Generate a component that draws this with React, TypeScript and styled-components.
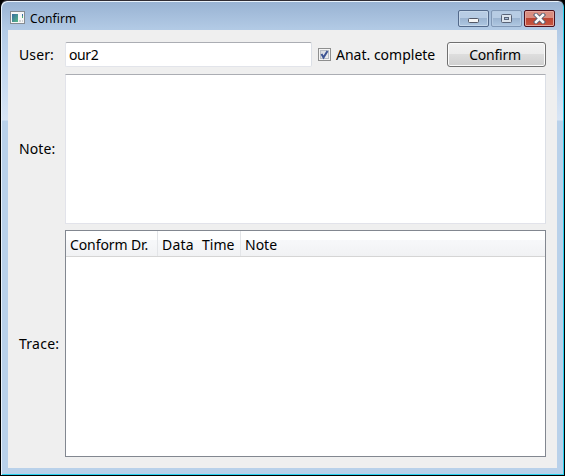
import React from "react";
import styled, { createGlobalStyle } from "styled-components";

const GlobalStyle = createGlobalStyle`
  * { box-sizing: border-box; }
  html, body { margin: 0; background: #000; overflow: hidden; }
  body { font-family: "Noto Sans", "Open Sans", sans-serif; font-size: 14px; color: #000; }
`;

const Window = styled.div`
  width: 565px;
  height: 476px;
  display: flex;
  flex-direction: column;
  border: 1px solid #000;
  border-top-color: #302c33;
  border-radius: 7px 7px 0 0;
  padding: 0 6px 7px;
  background: linear-gradient(#98b2d2 0, #b2cae5 28px, #bfd5ee 60px, #d8e5f5 119px, #b9d1ea 120px);
  box-shadow: inset 1px 1px 0 #e9f2fb, inset -1px -1px 0 #27d1ee;
`;

const TitleBar = styled.header`
  height: 29px;
  flex: none;
  display: flex;
  align-items: flex-start;
  padding: 0 3px 0 3px;
`;

const AppIcon = styled.svg`
  width: 15px;
  height: 13px;
  margin-top: 10px;
`;

const Title = styled.span`
  flex: 1;
  margin: 9px 0 0 5px;
  font-size: 12px;
  line-height: 17px;
  letter-spacing: 0.1px;
`;

const CaptionButtons = styled.div`
  display: flex;
  gap: 2px;
  margin-top: 9px;
`;

const CaptionButton = styled.button<{ $kind: "normal" | "dim" | "close" }>`
  width: 31px;
  height: 17px;
  padding: ${(p) => (p.$kind === "normal" ? "4px 0 0" : "0")};
  display: flex;
  align-items: center;
  justify-content: center;
  border-radius: 2px;
  border: 1px solid ${(p) => ({ normal: "#53698a", dim: "#8097b5", close: "#4c101d" })[p.$kind]};
  box-shadow: inset 0 0 0 1px ${(p) => (p.$kind === "close" ? "#e4a59c" : p.$kind === "dim" ? "#b5cae2" : "#c5d7ea")};
  background: ${(p) =>
    p.$kind === "close"
      ? "linear-gradient(#d98d80 0 45%, #bd4533 50%, #c85742)"
      : "linear-gradient(#b7cce4 0 45%, #9bb4d1 50%, #afc7e2)"};
  svg { display: block; flex: none; }
`;

const Client = styled.main`
  flex: 1;
  width: 549px;
  margin-left: 1px;
  display: grid;
  grid-template-columns: 46px 481px;
  grid-template-rows: 26px 150px 227px;
  row-gap: 6px;
  padding: 12px 11px 11px;
  background: #efefef;
`;

const Label = styled.label<{ $lift?: boolean; $spacing?: number }>`
  align-self: center;
  padding-bottom: ${(p) => (p.$lift ? 2 : 0)}px;
  line-height: 19px;
  letter-spacing: ${(p) => p.$spacing ?? 0.1}px;
  white-space: nowrap;
`;

const TopRow = styled.div`
  display: flex;
  align-items: flex-start;
`;

const UserField = styled.input`
  width: 247px;
  height: 25px;
  padding: 0 3px;
  border: 1px solid #e2e4ea;
  border-top-color: #abadb3;
  border-right-color: #dbdfe6;
  border-radius: 2px;
  outline: 0;
  background: #fff;
  font: inherit;
  letter-spacing: -0.4px;
`;

const CheckLabel = styled.label`
  display: flex;
  align-items: center;
  gap: 5px;
  width: 129px;
  height: 25px;
  margin-left: 6px;
  line-height: 19px;
  white-space: nowrap;
`;

const CheckBox = styled.span`
  width: 13px;
  height: 13px;
  border: 1px solid #8e8f8f;
  box-shadow: inset 0 0 0 1px #f4f4f4, inset 0 0 0 2px #b7bdc5;
  background: linear-gradient(135deg, #ced3da, #f6f6f6);
  svg { display: block; }
`;

const ConfirmButton = styled.button`
  width: 99px;
  height: 25px;
  padding: 0 3px 0 0;
  border: 1px solid #707070;
  border-radius: 3px;
  box-shadow: inset 0 0 0 1px #fbfbfb;
  background: linear-gradient(#f2f2f2 0, #ebebeb 50%, #dddddd 50%, #cfcfcf);
  font: inherit;
  letter-spacing: -0.25px;
  color: #000;
`;

const NoteArea = styled.textarea`
  width: 481px;
  height: 150px;
  resize: none;
  outline: 0;
  border: 1px solid #e2e3ea;
  border-top-color: #abadb3;
  border-right-color: #dbdfe6;
  background: #fff;
`;

const TraceTable = styled.div`
  height: 227px;
  border: 1px solid #828790;
  background: #fff;
`;

const TableHeader = styled.div`
  display: flex;
  height: 26px;
  border-bottom: 1px solid #d5d5d5;
  background: linear-gradient(#fff 0 9px, #f7f8fa 9px, #f1f2f4 25px);
`;

const HeaderCell = styled.div<{ $w: number; $line?: boolean; $spacing?: number }>`
  width: ${(p) => p.$w}px;
  padding-left: 4px;
  line-height: 28px;
  letter-spacing: ${(p) => p.$spacing ?? 0}px;
  white-space: nowrap;
  border-right: ${(p) => (p.$line ? "1px solid #e3e5e8" : "0")};
`;

export default function App() {
  return (
    <>
      <GlobalStyle />
      <Window>
        <TitleBar>
          <AppIcon viewBox="0 0 15 13">
            <defs>
              <linearGradient id="screen" x2="1" y2="1">
                <stop stopColor="#386ca0" />
                <stop offset="1" stopColor="#56b987" />
              </linearGradient>
            </defs>
            <path fill="#858b91" d="M0 0h15v13H0z" />
            <path fill="#f7f7f7" d="M1 1h13v11H1z" />
            <path fill="url(#screen)" d="M2 3h6v8H2z" />
            <path fill="#3e6da8" d="M12 3h1v2h-1z" />
            <path fill="#4fae72" d="M12 5h1v2h-1z" />
            <path fill="#cfd2d4" d="M9 9h2v2H9zM12 9h1v2h-1z" />
          </AppIcon>
          <Title>Confirm</Title>
          <CaptionButtons>
            <CaptionButton $kind="normal" aria-label="Minimize">
              <svg width="11" height="5">
                <rect x=".5" y=".5" width="10" height="4" rx="1" fill="#f6f6f6" stroke="#535866" />
              </svg>
            </CaptionButton>
            <CaptionButton $kind="dim" aria-label="Maximize">
              <svg width="11" height="9">
                <rect x=".5" y=".5" width="10" height="8" rx="1" fill="#dce4ed" stroke="#596377" />
                <rect x="3.5" y="3.5" width="4" height="2" fill="#a5bad4" stroke="#596377" />
              </svg>
            </CaptionButton>
            <CaptionButton $kind="close" aria-label="Close">
              <svg width="13" height="11">
                <path d="M3 2 10 9M10 2 3 9" fill="none" stroke="#595f72" strokeWidth="4.4" strokeLinecap="square" />
                <path d="M3 2 10 9M10 2 3 9" fill="none" stroke="#fafafa" strokeWidth="2.5" strokeLinecap="square" />
              </svg>
            </CaptionButton>
          </CaptionButtons>
        </TitleBar>
        <Client>
          <Label $lift>User:</Label>
          <TopRow>
            <UserField defaultValue="our2" />
            <CheckLabel>
              <CheckBox>
                <svg width="11" height="11">
                  <path d="M2.5 5 4.5 8.5 8.500 2" fill="none" stroke="#3d5594" strokeWidth="2" />
                </svg>
              </CheckBox>
              Anat. complete
            </CheckLabel>
            <ConfirmButton>Confirm</ConfirmButton>
          </TopRow>
          <Label $lift>Note:</Label>
          <NoteArea />
          <Label $spacing={0.25}>Trace:</Label>
          <TraceTable>
            <TableHeader>
              <HeaderCell $w={92} $line $spacing={-0.1}>Conform Dr.</HeaderCell>
              <HeaderCell $w={40} $spacing={0.2}>Data</HeaderCell>
              <HeaderCell $w={43} $line>Time</HeaderCell>
              <HeaderCell $w={304}>Note</HeaderCell>
            </TableHeader>
          </TraceTable>
        </Client>
      </Window>
    </>
  );
}
